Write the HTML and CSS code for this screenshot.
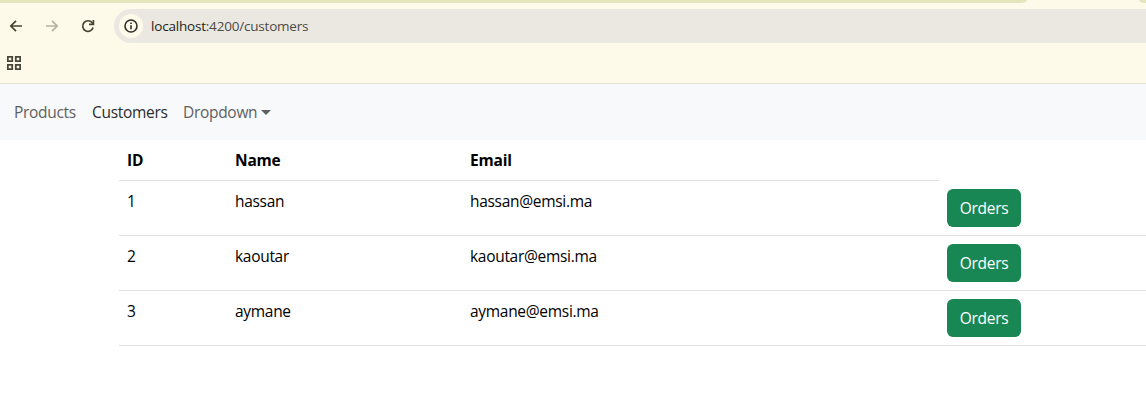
FILE: index.html
```
<!DOCTYPE html>
<html lang="en">
<head>
<meta charset="utf-8">
<title>Customers</title>
<link rel="stylesheet" href="styles.css">
</head>
<body>
<header class="browser">
  <div class="tabstrip"><span class="tabs-left"></span><span class="tabs-right"></span></div>
  <div class="toolbar">
    <svg class="tool" width="16" height="16" viewBox="0 0 16 16"><path d="M14 8H3M8 2.8 2.8 8 8 13.2"/></svg>
    <svg class="tool tool-disabled" width="16" height="16" viewBox="0 0 16 16"><path d="M2 8h11M8 2.8 13.2 8 8 13.2"/></svg>
    <svg class="tool" width="16" height="16" viewBox="0 0 16 16"><path d="M13.1 9.6A5.3 5.3 0 1 1 12.2 4.8L13.4 6"/><path d="M13.4 2v4.4H9"/></svg>
    <div class="address">
      <span class="site-info"><svg width="14" height="14" viewBox="0 0 14 14"><circle cx="7" cy="7" r="6"/><path d="M7 6.2v4M7 3.6v1.5"/></svg></span>
      <span class="url"><span class="host">localhost</span>:4200/customers</span>
    </div>
  </div>
  <div class="bookmarks">
    <svg width="14" height="14" viewBox="0 0 14 14"><path d="M.8.8h4.4v4.4H.8zM8.8.8h4.4v4.4H8.8zM.8 8.8h4.4v4.4H.8zM8.8 8.8h4.4v4.4H8.8z"/></svg>
  </div>
</header>
<nav class="navbar">
  <a class="link products">Products</a>
  <a class="link customers active">Customers</a>
  <a class="link dropdown"><span class="dropdown-label">Dropdown</span><span class="caret"></span></a>
</nav>
<main class="content">
  <table class="table">
    <colgroup><col class="col-id"><col class="col-name"><col class="col-email"><col class="col-action"></colgroup>
    <thead><tr><th>ID</th><th>Name</th><th>Email</th></tr></thead>
    <tbody>
      <tr><td>1</td><td>hassan</td><td>hassan@emsi.ma</td><td><button class="btn">Orders</button></td></tr>
      <tr><td>2</td><td>kaoutar</td><td>kaoutar@emsi.ma</td><td><button class="btn">Orders</button></td></tr>
      <tr><td>3</td><td>aymane</td><td>aymane@emsi.ma</td><td><button class="btn">Orders</button></td></tr>
    </tbody>
  </table>
</main>
</body>
</html>
```
FILE: styles.css
```
* { box-sizing: border-box; }
body {
  margin: 0;
  height: 403px;
  overflow: hidden;
  background: #fff;
  color: #000;
  font: 15.5px/25px "Segoe UI", "Open Sans", sans-serif;
  letter-spacing: -0.3px;
}
svg { display: block; fill: none; flex: none; }

.browser { height: 84px; background: #fefaea; border-bottom: 1px solid #e8e1d3; }
.tabstrip { display: flex; justify-content: space-between; height: 3px; }
.tabs-left { width: 1027px; background: #e5e5bd; border-bottom-right-radius: 6px 3px; }
.tabs-right { width: 7px; background: #e5e5bd; border-bottom-left-radius: 6px 3px; }
.toolbar { display: flex; align-items: center; height: 34px; margin-top: 6px; padding-left: 8px; }
.tool { margin-right: 20px; stroke: #47452f; stroke-width: 1.7; }
.tool-disabled { stroke: #b3b1a2; }
.address {
  display: flex;
  flex: 1;
  align-items: center;
  height: 34px;
  margin-left: -2px;
  padding-left: 5px;
  border-radius: 17px 0 0 17px;
  background: #ebe8e1;
}
.site-info {
  display: flex;
  align-items: center;
  justify-content: center;
  width: 24px;
  height: 24px;
  border-radius: 50%;
  background: #fefaea;
}
.site-info svg { stroke: #302f28; stroke-width: 1.6; }
.url { margin-left: 8px; color: #4b4a45; font-size: 13.5px; letter-spacing: -0.2px; }
.host { color: #1f1e1a; }
.bookmarks { padding: 13px 0 0 7px; }
.bookmarks svg { stroke: #47463b; stroke-width: 1.8; }

.navbar { display: flex; align-items: center; height: 56px; padding-left: 14px; background: #f8f9fa; }
.link { color: #5f6061; }
.products { width: 78px; }
.customers { width: 91px; }
.active { color: #2b2c2d; }
.dropdown { display: flex; align-items: center; }
.dropdown-label { width: 75px; }
.caret { margin-left: 3px; border: 5px solid transparent; border-top-color: currentColor; border-bottom: 0; }

.content { padding-left: 119px; }
.table { width: 1027px; table-layout: fixed; border-collapse: separate; border-spacing: 0; }
.col-id { width: 108px; }
.col-name { width: 235px; }
.col-email { width: 477px; }
.col-action { width: 207px; }
.table th, .table td { padding: 8px 8px 7px; border-bottom: 1px solid #dee2e6; text-align: left; vertical-align: top; }
.table td { padding-bottom: 8px; }
.table th { font-weight: 700; letter-spacing: -0.2px; }
.btn {
  display: block;
  width: 74px;
  height: 38px;
  padding: 0;
  border: 0;
  border-radius: 6px;
  background: #198754;
  color: #fff;
  font: inherit;
  letter-spacing: inherit;
}
```
